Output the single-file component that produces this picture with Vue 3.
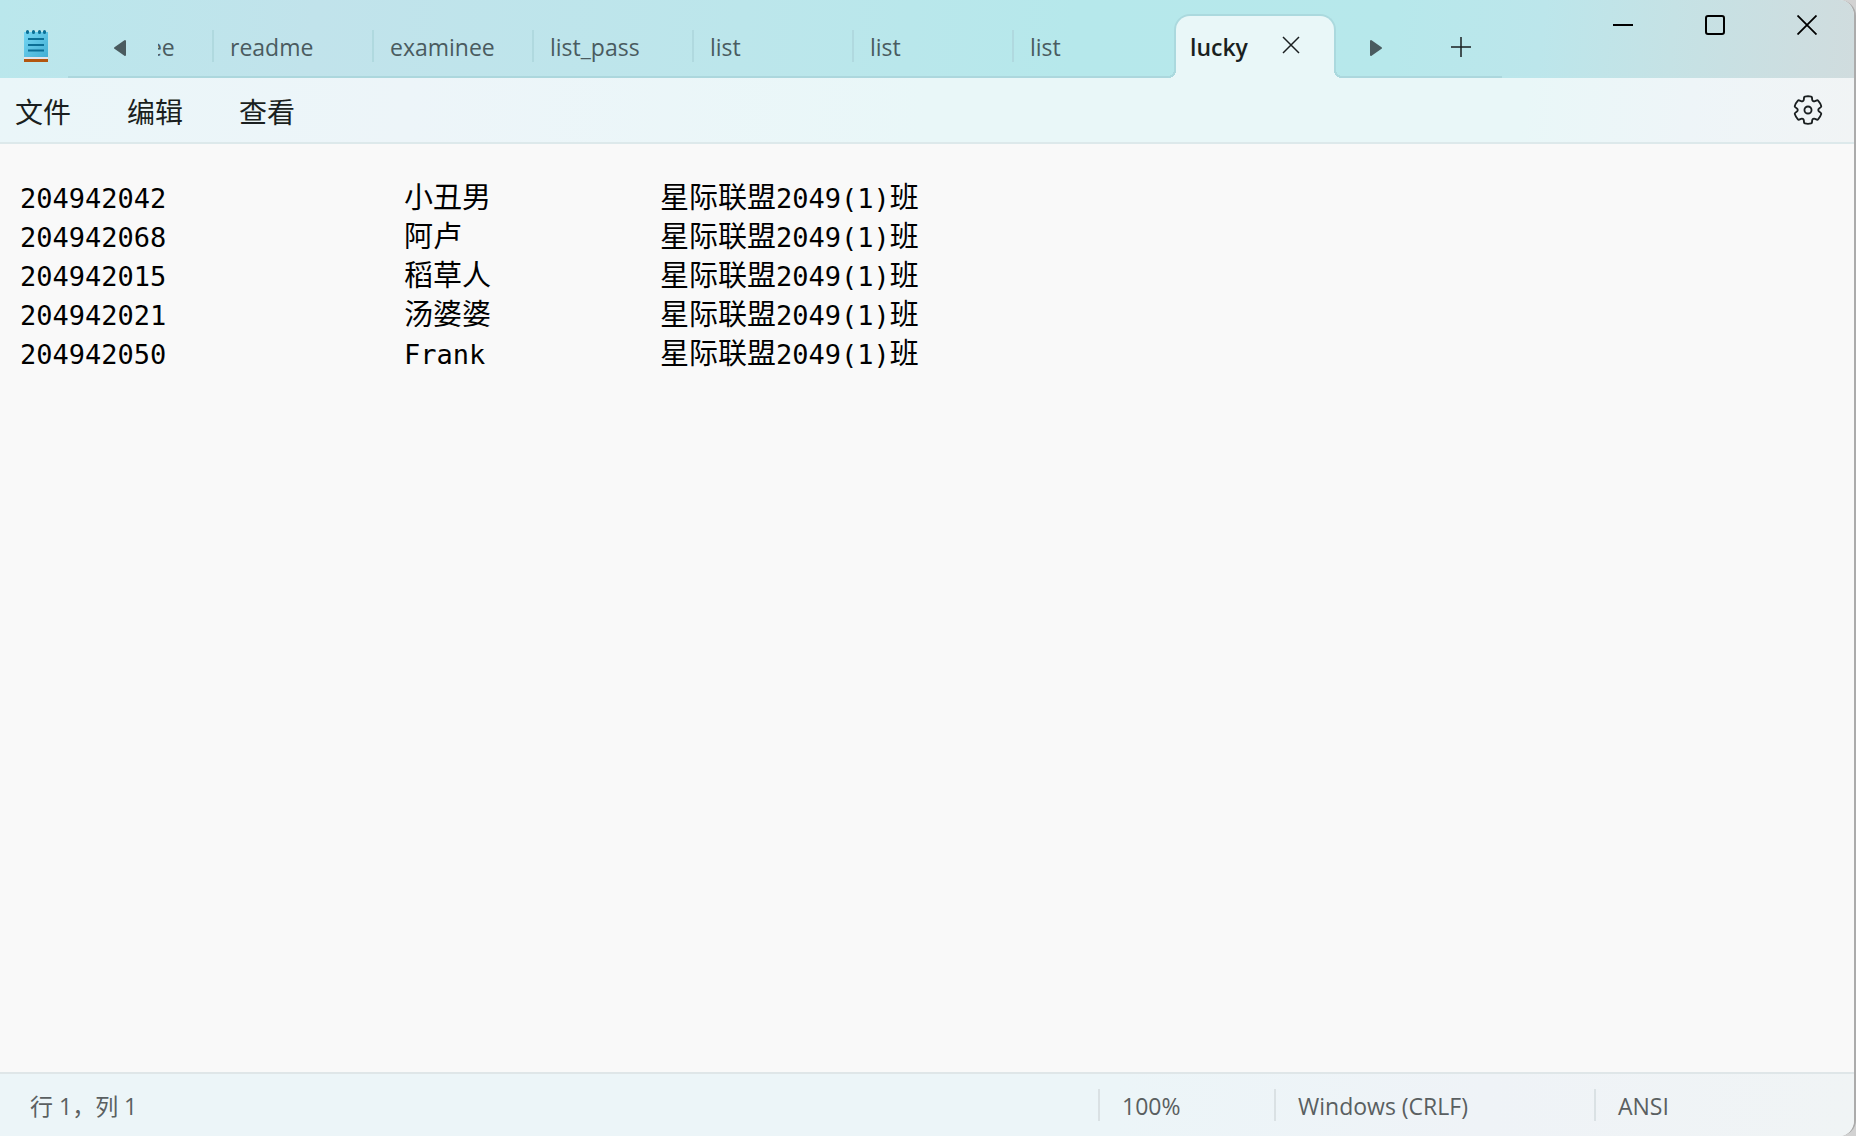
<script setup>
import { ref } from 'vue'

const tabs = ref([
  { id: 1, title: 'examinee' },
  { id: 2, title: 'readme' },
  { id: 3, title: 'examinee' },
  { id: 4, title: 'list_pass' },
  { id: 5, title: 'list' },
  { id: 6, title: 'list' },
  { id: 7, title: 'list' },
  { id: 8, title: 'lucky' }
])
const activeId = ref(8)

const menus = ['文件', '编辑', '查看']

const lines = [
  { id: '204942042', name: '小丑男' },
  { id: '204942068', name: '阿卢' },
  { id: '204942015', name: '稻草人' },
  { id: '204942021', name: '汤婆婆' },
  { id: '204942050', latin: 'Frank' }
]
</script>

<template>
  <div class="desktop">
    <div class="window">
      <header class="titlebar">
        <div class="app-icon">
          <svg width="24" height="32" viewBox="0 0 24 32" aria-hidden="true">
            <defs>
              <linearGradient id="pad" x1="0" y1="0" x2="1" y2="1">
                <stop offset="0" stop-color="#74d6f3" />
                <stop offset="1" stop-color="#43afd4" />
              </linearGradient>
            </defs>
            <rect y="26" width="24" height="3" fill="#e4e4ea" />
            <rect y="29" width="24" height="3" fill="#b3560f" />
            <rect y="2" width="24" height="25" fill="url(#pad)" />
            <path d="M3.500 1.500v1M9.500 1.500v1M15.500 1.500v1M20.500 1.500v1" stroke="#0b6f96" stroke-width="3" stroke-linecap="round" />
            <path d="M4 9h16M4 15h16M4 20.500h16" stroke="#0b6f96" stroke-width="2" />
          </svg>
        </div>
        <div class="strip">
          <button class="scroll back" aria-label="向左滚动">
            <svg width="14" height="18" viewBox="0 0 14 18" aria-hidden="true">
              <path d="M12 2v14L2 9z" fill="#4a5b5f" stroke="#4a5b5f" stroke-width="2" stroke-linejoin="round" />
            </svg>
          </button>
          <div class="tabs" role="tablist">
            <div v-for="tab in tabs" :key="tab.id" class="tab" :class="{ active: tab.id === activeId }">
              <button class="tab-title" role="tab" :aria-selected="tab.id === activeId" @click="activeId = tab.id">{{ tab.title }}</button>
              <button v-if="tab.id === activeId" class="tab-close" aria-label="关闭标签页">
                <svg width="18" height="18" viewBox="0 0 18 18" aria-hidden="true">
                  <path d="M1 1l16 16M17 1L1 17" stroke="#1a1f20" stroke-width="1.500" />
                </svg>
              </button>
            </div>
          </div>
          <button class="scroll forward" aria-label="向右滚动">
            <svg width="14" height="18" viewBox="0 0 14 18" aria-hidden="true">
              <path d="M2 2v14l10-7z" fill="#4a5b5f" stroke="#4a5b5f" stroke-width="2" stroke-linejoin="round" />
            </svg>
          </button>
          <button class="new-tab" aria-label="新建标签页">
            <svg width="20" height="20" viewBox="0 0 20 20" aria-hidden="true">
              <path d="M10 0v20M0 10h20" stroke="#1a1f20" stroke-width="1.500" />
            </svg>
          </button>
        </div>
        <div class="captions">
          <button aria-label="最小化">
            <svg width="20" height="20" viewBox="0 0 20 20" aria-hidden="true"><path d="M0 10h20" stroke="#000" stroke-width="2" /></svg>
          </button>
          <button aria-label="最大化">
            <svg width="20" height="20" viewBox="0 0 20 20" aria-hidden="true"><rect x="1" y="1" width="18" height="18" rx="2" fill="none" stroke="#000" stroke-width="2" /></svg>
          </button>
          <button aria-label="关闭">
            <svg width="20" height="20" viewBox="0 0 20 20" aria-hidden="true"><path d="M0.500 0.500l19 19M19.500 0.500l-19 19" stroke="#000" stroke-width="1.800" /></svg>
          </button>
        </div>
      </header>

      <nav class="menubar">
        <button v-for="menu in menus" :key="menu" class="menu">{{ menu }}</button>
        <button class="settings" aria-label="设置">
          <svg width="34" height="34" viewBox="0 0 24 24" aria-hidden="true" fill="none" stroke="#1a1f20" stroke-width="1.300">
            <path d="M12.012 2.250c.735.008 1.466.093 2.182.253a.75.75 0 0 1 .582.649l.17 1.527a1.384 1.384 0 0 0 1.927 1.116l1.400-.615a.75.75 0 0 1 .85.174 9.793 9.793 0 0 1 2.205 3.792.75.75 0 0 1-.272.825l-1.241.916a1.380 1.380 0 0 0 0 2.226l1.243.915a.75.75 0 0 1 .272.826 9.798 9.798 0 0 1-2.204 3.792.75.75 0 0 1-.849.175l-1.406-.617a1.380 1.380 0 0 0-1.926 1.114l-.17 1.526a.75.75 0 0 1-.571.647 9.518 9.518 0 0 1-4.406 0 .75.75 0 0 1-.572-.647l-.169-1.524a1.382 1.382 0 0 0-1.925-1.110l-1.406.616a.75.75 0 0 1-.849-.175 9.798 9.798 0 0 1-2.204-3.796.75.75 0 0 1 .272-.826l1.243-.916a1.380 1.380 0 0 0 0-2.226l-1.243-.914a.75.75 0 0 1-.272-.826 9.793 9.793 0 0 1 2.205-3.792.75.75 0 0 1 .85-.174l1.400.615a1.387 1.387 0 0 0 1.930-1.118l.17-1.526a.75.75 0 0 1 .583-.65c.717-.159 1.450-.243 2.201-.252z" />
            <circle cx="12" cy="12" r="2.500" />
          </svg>
        </button>
      </nav>

      <main class="editor" role="textbox" aria-multiline="true" aria-label="文本编辑器" contenteditable="true" spellcheck="false">
        <div v-for="line in lines" :key="line.id" class="line">
          <span>{{ line.id }}</span>
          <span v-if="line.latin">{{ line.latin }}</span>
          <span v-else class="han">{{ line.name }}</span>
          <span><span class="han">星际联盟</span>2049(1)<span class="han">班</span></span>
        </div>
      </main>

      <footer class="statusbar">
        <span class="position">行 1，列 1</span>
        <span class="cell zoom">100%</span>
        <span class="cell eol">Windows (CRLF)</span>
        <span class="cell encoding">ANSI</span>
      </footer>
    </div>
  </div>
</template>

<style>
body {
  margin: 0;
}
</style>

<style scoped>
.desktop {
  min-height: 100vh;
  display: flex;
  background: #d2d2d2;
  font-family: "Open Sans", "Noto Sans CJK SC", sans-serif;
}

.window {
  flex: 1;
  min-width: 0;
  display: flex;
  flex-direction: column;
  border-right: 2px solid #ababab;
  border-radius: 0 16px 16px 0;
  overflow: hidden;
  background: #f9f9f9;
}

button {
  display: flex;
  align-items: center;
  justify-content: center;
  padding: 0;
  border: 0;
  background: none;
  font: inherit;
  color: inherit;
}

svg {
  flex: none;
}

.titlebar {
  height: 78px;
  display: flex;
  background: linear-gradient(95deg, #bae7ec 0%, #c1e3eb 17%, #bce6eb 40%, #b6e8eb 58%, #b7e8eb 75%, #bce6eb 83%, #c5e2e5 90%, #d0dcde 100%);
}

.app-icon {
  width: 68px;
  flex: none;
  display: flex;
  align-items: center;
  box-sizing: border-box;
  padding: 14px 0 0 24px;
}

.strip {
  flex: 0 1 1434px;
  min-width: 0;
  display: flex;
  background: linear-gradient(#acd7dd, #acd7dd) bottom / 100% 2px no-repeat;
}

.scroll,
.new-tab {
  flex: none;
  padding-top: 18px;
}

.back {
  width: 90px;
  padding-left: 14px;
  box-sizing: border-box;
}

.forward {
  width: 72px;
}

.new-tab {
  width: 82px;
  padding-top: 16px;
  margin-left: 8px;
}

.tabs {
  flex: 1;
  min-width: 0;
  display: flex;
  justify-content: flex-end;
  overflow: hidden;
  font-size: 23px;
  color: #4a5b5f;
}

.tab {
  position: relative;
  flex: none;
  width: 160px;
  box-sizing: border-box;
  display: flex;
  align-items: center;
  padding: 15px 0 0 16px;
  background: linear-gradient(#b0d9df, #b0d9df) right 30px / 2px 32px no-repeat;
}

.tab:nth-last-child(2) {
  background: none;
}

.tab.active {
  width: 162px;
  margin: 14px 4px 0 0;
  padding: 0 0 1px 14px;
  border: 2px solid #abd9de;
  border-bottom: 0;
  border-radius: 16px 16px 0 0;
  background: #e9f7f8;
  color: #1a1f20;
  font-weight: 600;
}

.tab.active::before,
.tab.active::after {
  content: "";
  position: absolute;
  bottom: 0;
  width: 8px;
  height: 8px;
}

.tab.active::before {
  left: -8px;
  background: radial-gradient(circle at 0 0, transparent 6px, #abd9de 6px, #abd9de 8px, #e9f7f8 8px);
}

.tab.active::after {
  right: -8px;
  background: radial-gradient(circle at 100% 0, transparent 6px, #abd9de 6px, #abd9de 8px, #e9f7f8 8px);
}

.tab-close {
  margin: 0 34px 4px auto;
}

.captions {
  margin-left: auto;
  padding-right: 1px;
  display: flex;
  flex: none;
  height: 50px;
}

.captions button {
  width: 92px;
}

.menubar {
  height: 64px;
  display: flex;
  align-items: center;
  padding: 0 29px 0 15px;
  border-bottom: 2px solid #dde9eb;
  background: linear-gradient(95deg, #eaf6f9 0%, #edf5f9 22%, #e9f7f8 50%, #e9f7f8 82%, #eef5f8 91%, #f1f4f5 100%);
  color: #1a1f20;
}

.menu {
  width: 112px;
  padding-top: 4px;
  justify-content: flex-start;
  font-size: 28px;
  line-height: 40px;
}

.settings {
  margin-left: auto;
}

.editor {
  flex: 1;
  padding: 32px 20px;
  outline: none;
  background: #f9f9f9;
  color: #000;
  font-family: "DejaVu Sans Mono", "Noto Sans CJK SC", monospace;
  font-size: 27px;
}

.line {
  display: grid;
  grid-template-columns: 384px 256px 1fr;
  align-items: baseline;
  height: 39px;
  line-height: 39px;
  white-space: nowrap;
}

.han {
  font-family: "Noto Sans CJK SC", sans-serif;
  font-size: 29px;
}

.statusbar {
  height: 62px;
  display: flex;
  align-items: center;
  border-top: 2px solid #dfe6e8;
  background: linear-gradient(95deg, #ecf5f8 0%, #ecf5f8 60%, #eff3f7 80%, #f0f4f5 100%);
  color: #5a5f61;
  font-size: 23px;
}

.position {
  flex: 1;
  padding-left: 30px;
}

.cell {
  box-sizing: border-box;
  height: 32px;
  line-height: 34px;
  padding-left: 22px;
  border-left: 2px solid #dae1e4;
}

.zoom {
  width: 176px;
}

.eol {
  width: 320px;
}

.encoding {
  width: 260px;
}
</style>
